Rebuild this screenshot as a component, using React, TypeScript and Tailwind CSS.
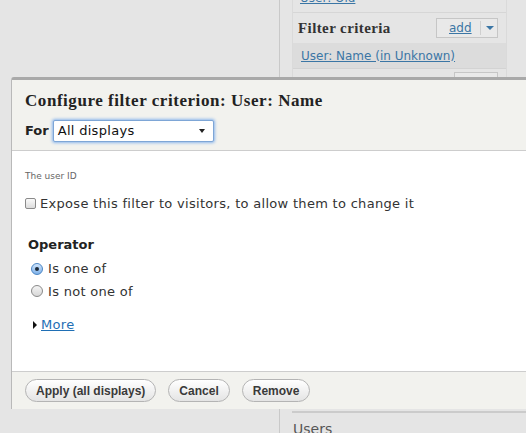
import React from "react";

const sans = { fontFamily: '"DejaVu Sans", Verdana, sans-serif' };
const serif = { fontFamily: '"Liberation Serif", Georgia, serif' };
const arial = { fontFamily: '"Liberation Sans", Arial, sans-serif' };

function PillButton({ label }: { label: string }) {
  return (
    <button
      style={arial}
      className="h-[23px] rounded-[12px] border border-[#b4b4b4] bg-gradient-to-b from-[#ffffff] to-[#e4e4e4] px-[10px] text-[12px] font-bold text-[#3a3a3a]"
    >
      {label}
    </button>
  );
}

function Radio({ checked, label }: { checked?: boolean; label: string }) {
  return (
    <label className="flex items-center gap-[5px] text-[13px] tracking-[0.3px] text-[#333]" style={sans}>
      {checked ? (
        <span className="flex h-[12px] w-[12px] items-center justify-center rounded-full border border-[#4a86c5] bg-gradient-to-b from-[#cfe4fb] to-[#7fb1e8]">
          <span className="h-[4px] w-[4px] rounded-full bg-[#1c2a3a]" />
        </span>
      ) : (
        <span className="h-[12px] w-[12px] rounded-full border border-[#8a8a8a] bg-gradient-to-b from-[#f4f4f4] to-[#d8d8d8]" />
      )}
      {label}
    </label>
  );
}

export default function App() {
  return (
    <div className="relative h-[433px] w-[526px] overflow-hidden bg-[#e5e5e5]">
      {/* page behind the dialog */}
      <div className="flex h-full">
        <div className="w-[280px] shrink-0 border-r border-[#c9c9c9]" />
        <div className="flex grow flex-col pl-[12px]" style={sans}>
          <div className="flex w-[215px] flex-col border-x border-[#dadada]">
            <div className="h-[13px] overflow-hidden border-b border-[#d6d6d6]">
              <a className="-mt-[10px] block pl-[7px] text-[12px] leading-[16px] text-[#3b76a5] underline">User: Old</a>
            </div>
            <div className="flex h-[30px] items-center justify-between pl-[5px] pr-[8px]">
              <span style={serif} className="text-[15px] font-bold tracking-[0.4px] text-[#333]">
                Filter criteria
              </span>
              <div className="flex h-[20px] w-[62px] items-center border border-[#c6c6c6] bg-[#e9e9e9]">
                <a className="ml-[12px] text-[12px] leading-none text-[#3b76a5] underline">add</a>
                <span className="ml-[8px] h-[14px] border-l border-[#cfcfcf]" />
                <span className="ml-[5px] h-0 w-0 border-x-[4px] border-t-[4px] border-x-transparent border-t-[#3b76a5]" />
              </div>
            </div>
            <div className="flex h-[25px] items-center bg-[#dcdcdc] pl-[8px]">
              <a className="text-[12px] text-[#3b76a5] underline">User: Name (in Unknown)</a>
            </div>
            <div className="h-px bg-[#d3d3d3]" />
            <div className="flex justify-end pr-[8px] pt-[3px]">
              <div className="h-[20px] w-[44px] border border-[#c6c6c6] bg-[#e9e9e9]" />
            </div>
          </div>
          <div className="mt-auto h-[22px]">
            <div className="h-[2px] bg-[#cbcbcb]" />
            <div className="pl-px pt-[8px] text-[14px] leading-[16px] text-[#555]">Users</div>
          </div>
        </div>
      </div>

      {/* configure filter dialog */}
      <div className="absolute left-[11px] top-[77px] flex w-[540px] flex-col overflow-hidden rounded-tl-[3px] border-l border-t-[3px] border-[#a9a9a9] border-l-[#b9b9b9]">
        <div className="h-[71px] border-b border-[#cdcdcd] bg-[#f2f2ee] pl-[13px] pt-[10px]">
          <h2 style={serif} className="text-[17px] font-bold leading-[22px] tracking-[0.55px] text-[#222]">
            Configure filter criterion: User: Name
          </h2>
          <div className="mt-[8px] flex items-center gap-[4px]" style={sans}>
            <span className="text-[13px] font-bold text-[#222]">For</span>
            <div className="flex h-[22px] w-[161px] items-center justify-between rounded-[2px] border border-[#7ea6d6] bg-white pl-[4px] pr-[8px] shadow-[0_0_3px_1px_#8db7ec]">
              <span className="text-[13px] tracking-[0.3px] text-[#111]">All displays</span>
              <span className="h-0 w-0 border-x-[3.5px] border-t-[4px] border-x-transparent border-t-[#222]" />
            </div>
          </div>
        </div>

        <div className="h-[220px] bg-white pl-[13px]" style={sans}>
          <p className="pt-[20px] text-[9px] leading-[11px] text-[#666]">The user ID</p>
          <label className="mt-[12px] flex items-center gap-[4px] text-[13px] tracking-[0.3px] text-[#333]">
            <span className="h-[11px] w-[11px] rounded-[2px] border border-[#8a8a8a] bg-gradient-to-b from-[#fafafa] to-[#dcdcdc]" />
            Expose this filter to visitors, to allow them to change it
          </label>
          <h3 className="mt-[21px] pl-[3px] text-[13px] font-bold text-[#222]">Operator</h3>
          <div className="mt-[5px] flex flex-col gap-[3px] pl-[6px]">
            <Radio checked label="Is one of" />
            <Radio label="Is not one of" />
          </div>
          <div className="mt-[14px] flex items-center gap-[4px] pl-[8px]">
            <span className="h-0 w-0 border-y-[4px] border-l-[4px] border-y-transparent border-l-[#111]" />
            <a className="text-[13px] tracking-[0.3px] text-[#1f6fb5] underline">More</a>
          </div>
        </div>

        <div className="flex h-[38px] items-center gap-[12px] border-t border-[#cdcdcd] bg-[#f2f2ee] pl-[13px]">
          <PillButton label="Apply (all displays)" />
          <PillButton label="Cancel" />
          <PillButton label="Remove" />
        </div>
      </div>
    </div>
  );
}
